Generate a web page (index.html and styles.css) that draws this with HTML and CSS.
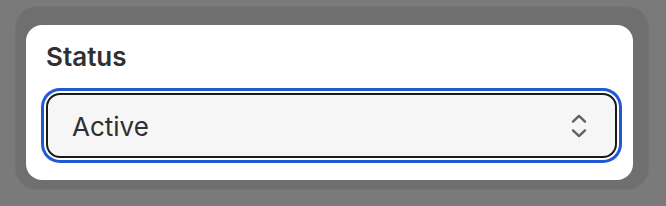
FILE: index.html
```html
<!DOCTYPE html>
<html lang="en">
<head>
  <meta charset="UTF-8">
  <meta name="viewport" content="width=device-width, initial-scale=1.0">
  <title>Status</title>
  <link rel="stylesheet" href="styles.css">
</head>
<body>
  <div class="frame">
    <div class="card">
      <div class="label">Status</div>
      <div class="select">
        <span class="value">Active</span>
        <svg class="chevrons" width="16" height="24" viewBox="0 0 16 24">
          <path d="M2 7.6 L8 1.9 L14 7.6" />
          <path d="M2 16.4 L8 22.1 L14 16.4" />
        </svg>
      </div>
    </div>
  </div>
</body>
</html>
```

FILE: styles.css
```css
body {
  margin: 0;
  background: #7a7a7a;
  font-family: Inter, "Noto Sans", Arial, sans-serif;
  color: #303030;
}
.frame {
  box-sizing: border-box;
  width: 634px;
  height: 184px;
  margin: 6px 0 0 15px;
  padding: 19px 16px 10px 11px;
  background: #6f6f6f;
  border-radius: 22px;
  box-shadow: inset 0 0 0 1px rgba(255, 255, 255, 0.04);
}
.card {
  box-sizing: border-box;
  height: 155px;
  background: #ffffff;
  border-radius: 16px;
  padding: 16px 16px 22px 20px;
}
.label {
  font-size: 26px;
  line-height: 32px;
  font-weight: 600;
  margin-bottom: 20px;
}
.select {
  box-sizing: border-box;
  height: 65px;
  display: flex;
  align-items: center;
  justify-content: space-between;
  padding: 0 28px 0 24px;
  background: #f6f6f6;
  border: 2px solid #1a1a1a;
  border-radius: 14px;
  box-shadow: 0 0 0 2px #ffffff, 0 0 0 5px #2258d4;
}
.value {
  font-size: 26px;
  line-height: 32px;
  padding-top: 2px;
}
.chevrons {
  display: block;
}
.chevrons path {
  fill: none;
  stroke: #616161;
  stroke-width: 2.4;
  stroke-linecap: round;
  stroke-linejoin: round;
}
```
